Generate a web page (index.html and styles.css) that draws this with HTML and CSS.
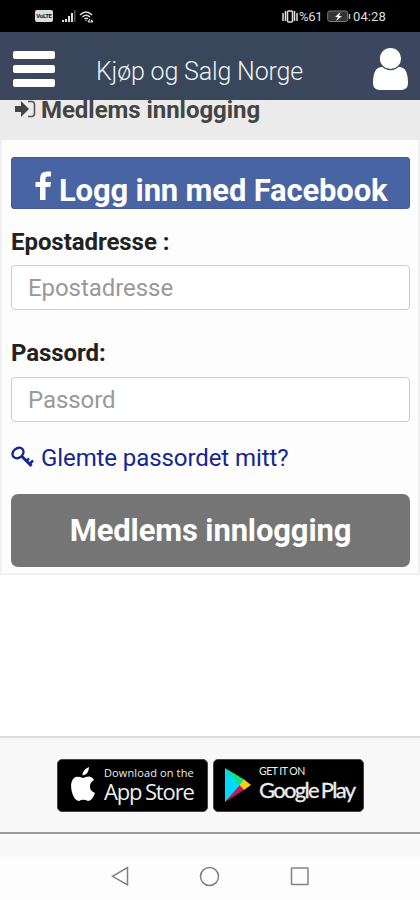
FILE: index.html
```
<!DOCTYPE html>
<html lang="no">
<head>
<meta charset="utf-8">
<title>Kjøp og Salg Norge</title>
<link rel="stylesheet" href="styles.css">
</head>
<body>
<div class="status">
  <div class="status-left">
    <span class="volte">VoLTE</span>
    <svg class="signal" width="14" height="13" viewBox="0 0 14 13"><path d="M0 12v-2h2v2zM3 12V9h2v3zM6 12V6h2v6zM9 12V3h2v9z" fill="#ddd"/><path d="M12 12V0h1.500v12z" fill="#555"/></svg>
    <svg width="16" height="14" viewBox="0 0 16 14" fill="none" stroke="#ddd" stroke-width="1.500"><path d="M1 5Q7-1 13 5M3.500 7Q7 3.500 11 7M5.500 9Q7 7.500 9 9"/><path d="M7 10v1M9 12h5M11 9l-2 3M12 10l2 2" stroke-width="1.200"/></svg>
  </div>
  <div class="status-right">
    <svg width="16" height="13" viewBox="0 0 16 13" fill="none" stroke="#ddd" stroke-width="1.500"><path d="M1 3v8M3.500 1v10M12.500 1v10M15 3v8"/><rect x="5.500" y="1" width="5" height="11" rx="1"/></svg>
    <span class="percent">%61</span>
    <svg class="battery" width="24" height="13" viewBox="0 0 24 13"><rect x=".7" y="1" width="20" height="10.500" rx="2" fill="#333" stroke="#777"/><path d="M22.500 4v5" stroke="#bbb" stroke-width="1.500"/><path d="M13.500 2 8 7h3l-2 4 6-5h-3z" fill="#fff"/></svg>
    <span class="time">04:28</span>
  </div>
</div>
<header class="topbar">
  <div class="menu"><i></i><i></i><i></i></div>
  <h1 class="title">Kjøp og Salg Norge</h1>
  <svg class="user" width="37" height="45" viewBox="0 0 37 45"><path d="M10 20Q1 20 1 36Q1 43 8 43H29Q36 43 36 36Q36 20 27 20Z" fill="#fff"/><circle cx="18.500" cy="11.500" r="11.200" fill="#fff" stroke="#3d465f" stroke-width="1.200"/></svg>
</header>
<main>
  <div class="heading">
    <svg width="22" height="18" viewBox="0 0 22 18"><path d="M1 6h6V1l8 8-8 8v-5H1z" fill="#444"/><path d="M14 1.500h3.500q3 0 3 3v9q0 3-3 3H14" fill="none" stroke="#555" stroke-width="1.600"/></svg>
    <h2>Medlems innlogging</h2>
  </div>
  <form class="card">
    <div class="facebook">
      <svg width="17" height="30" viewBox="0 0 17 30"><path d="M16 .5V5.500H13Q10.500 5.500 10.500 8v3H16l-.7 5H10.500v13H5V16H.5V11H5V7.500Q5 .5 12 .5Z" fill="#fff"/></svg>
      <span class="fb-text">Logg inn med Facebook</span>
    </div>
    <label for="email"><span class="email-label">Epostadresse :</span></label>
    <input id="email" type="text" placeholder="Epostadresse">
    <label class="second" for="pass"><span class="pass-label">Passord:</span></label>
    <input id="pass" type="password" placeholder="Passord">
    <a class="forgot">
      <svg width="24" height="22" viewBox="0 0 24 22" fill="none" stroke="#14268f"><ellipse cx="7" cy="7" rx="6" ry="4.700" transform="rotate(-40 7 7)" stroke-width="2.300"/><path d="M10.500 10 20.500 20" stroke-width="3"/><path d="M15.500 15 18 12.300M18.500 18 22 14.500" stroke-width="2.500"/></svg>
      <span class="forgot-text">Glemte passordet mitt?</span>
    </a>
    <button class="login" type="button"><span class="login-text">Medlems innlogging</span></button>
  </form>
</main>
<footer class="stores">
  <div class="store">
    <svg class="apple" width="24" height="35" viewBox="0 0 24 35" fill="#fff"><path d="M18 0Q18 7 11.500 8.500Q11.500 2.500 18 0ZM12 11Q20 7 23 13Q19 15 19 19.500Q19 24 24 26Q21 34 17 34Q12 31.500 8 34Q4 34 1.500 27Q-2 16 3 11Q6 8.500 12 11Z"/></svg>
    <div class="store-copy"><span class="small download">Download on the</span><span class="big app">App Store</span></div>
  </div>
  <div class="store google">
    <svg class="play" width="28" height="36" viewBox="0 0 28 36"><path d="M1 1v34l16-17z" fill="#00d9ff"/><path d="M1 1 21 13l-5 6z" fill="#13e37c"/><path d="M1 35 16 18l4 5z" fill="#c61562"/><path d="M20 12.500 27 18l-7 5-4.500-5z" fill="#ffcb0b"/></svg>
    <div class="store-copy"><span class="small get">GET IT ON</span><span class="big gp">Google Play</span></div>
  </div>
</footer>
<nav class="android" aria-label="System">
  <svg width="18" height="21" viewBox="0 0 18 21"><path d="M16.500 1.500v17.500L1.500 10.300z"/></svg>
  <svg width="21" height="21" viewBox="0 0 21 21"><circle cx="10.500" cy="10.500" r="9"/></svg>
  <svg width="19" height="21" viewBox="0 0 19 21"><rect x="1.500" y="2" width="16.500" height="16.500" rx=".5"/></svg>
</nav>
</body>
</html>
```
FILE: styles.css
```
* { box-sizing: border-box; }
body { margin: 0; width: 420px; height: 900px; overflow: hidden; display: flex; flex-direction: column; background: #fefefe; font-family: Roboto, "Liberation Sans", sans-serif; color: #222; }
svg { display: block; flex: none; }
span, h1, h2 { white-space: nowrap; }
.status { height: 32px; flex: none; background: #000; color: #ddd; display: flex; justify-content: space-between; padding: 10px 34px 0 35px; }
.status-left, .status-right { display: flex; align-items: flex-start; }
.volte { width: 18px; height: 12px; border-radius: 2px; background: #ddd; color: #111; font-size: 6px; line-height: 12px; font-weight: 700; text-align: center; letter-spacing: -.3px; }
.signal { margin: 0 3px 0 9px; }
.percent, .time { font-size: 13px; line-height: 13px; }
.percent { margin-left: 1px; letter-spacing: -.3px; width: 24px; }
.battery { margin: 0 2px 0 4px; }
.time { width: 33px; letter-spacing: .1px; }
.topbar { height: 68px; flex: none; display: flex; align-items: flex-start; padding: 0 11px 0 13px; background: linear-gradient(90deg, #3d465f, #384759 38%, #384759 55%, #3d465f 85%); }
.menu { width: 42px; margin-top: 19px; display: grid; gap: 6px; }
.menu i { height: 8px; border-radius: 2px; background: #fff; }
.title { margin: 25px 0 0 41px; width: 210px; font-size: 25px; line-height: 30px; font-weight: 300; letter-spacing: -.16px; color: #eef2f6; }
.user { margin: 15px 0 0 auto; }
.heading { height: 40px; background: #ebebeb; display: flex; align-items: flex-start; padding-left: 14px; }
.heading svg { height: 18px; }
.heading h2 { margin: -4px 0 0 5px; color: #444; font-size: 24px; line-height: 28px; font-weight: 700; letter-spacing: -.05px; }
.card { margin: 0; height: 435px; border: 2px solid #f1f1f1; border-top: 0; background: #fdfdfd; padding: 17px 8px 6px 9px; display: flex; flex-direction: column; }
.card > * { flex-shrink: 0; }
.facebook { height: 52px; background: #4864a2; border: 1px solid #3e5b9d; border-radius: 3px; display: flex; padding: 13px 0 0 23px; color: #fff; }
.facebook span { margin: 2px 0 0 7px; font-size: 31px; line-height: 36px; font-weight: 700; letter-spacing: -.16px; }
label { margin-top: 19px; height: 37px; font-size: 24px; line-height: 28px; font-weight: 700; letter-spacing: -.06px; }
label.second { margin-top: 29px; height: 38px; }
input { width: 100%; height: 45px; border: 1.500px solid #ccc; border-radius: 4px; background: #fff; padding: 1px 16px 0; font: 24px/28px Roboto, "Liberation Sans", sans-serif; letter-spacing: -.06px; }
input::placeholder { color: #999; opacity: 1; }
.forgot { margin-top: 22px; height: 28px; display: flex; color: #14268f; font-size: 24px; line-height: 28px; letter-spacing: -.09px; }
.forgot svg { margin-top: 2px; }
.forgot span { margin-left: 6px; }
.login { margin: 22px 0 0; padding: 1px 0 0; height: 73px; border: 0; border-radius: 7px; background: #757575; color: #fff; font: 700 31px/36px Roboto, "Liberation Sans", sans-serif; letter-spacing: -.14px; }
.stores { margin-top: 161px; height: 98px; flex: none; border-top: 2px solid #ddd; border-bottom: 2px solid #999; background: #f8f8f8; display: flex; align-items: flex-start; gap: 5px; padding: 21px 0 0 57px; }
.store { width: 151px; height: 53px; border: 1px solid #444; border-radius: 5px; background: #000; color: #eee; display: flex; padding: 7px 0 0 13px; }
.store.google { padding-left: 10px; }
.store-copy { margin-left: 9px; display: flex; flex-direction: column; }
.google .store-copy { margin-left: 7px; }
.small { font: 11px/12px "Open Sans", sans-serif; letter-spacing: .12px; }
.big { font: 22px/25px "Open Sans", sans-serif; letter-spacing: -1.150px; word-spacing: -1px; }
.download { line-height: 11px; }
.app { margin-top: 1px; }
.get, .gp { font-family: Lato, sans-serif; }
.get { font-size: 10.500px; line-height: 9px; letter-spacing: -.5px; }
.gp { font-size: 22px; line-height: 28px; letter-spacing: -1.700px; word-spacing: -1px; -webkit-text-stroke: .3px #eee; }
.android { flex: 1; padding: 32px 111px 0; background: linear-gradient(#f9f9f9 0 24px, #fdfdfd 24px); display: flex; justify-content: space-between; align-items: flex-start; }
.android svg { fill: none; stroke: #828282; stroke-width: 1.500; }
```
